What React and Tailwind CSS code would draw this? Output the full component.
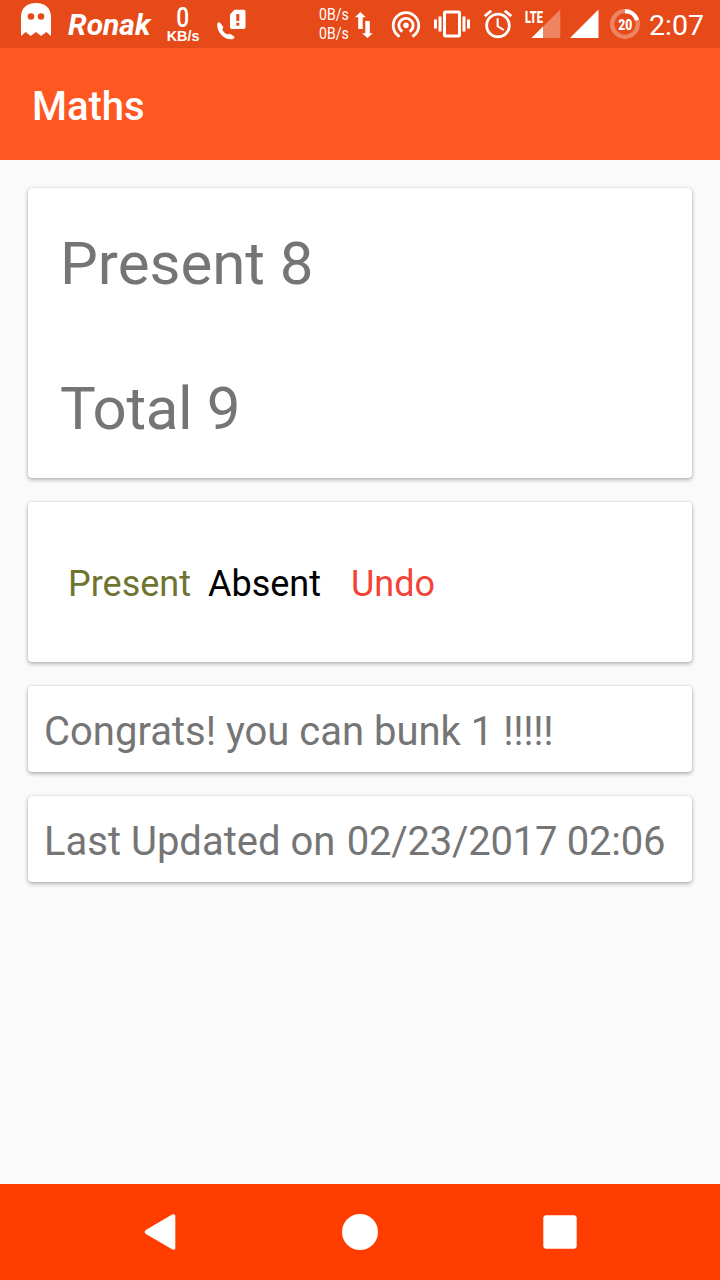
import React from "react";
import { MdWifiTethering, MdVibration, MdAccessAlarm } from "react-icons/md";

function Ghost() {
  return (
    <svg className="ml-[21px] mt-[3px] h-[33px] w-[30px] shrink-0" viewBox="0 0 30 33" fill="white">
      <path fillRule="evenodd" d="M0 33V14C0 5 6 0 15 0s15 5 15 14v19l-4.700-4L20 33l-5-4-5.300 4-5-4zM10 10.200a3.300 3.300 0 1 0 0 6.600 3.300 3.300 0 0 0 0-6.600zm10 0a3.300 3.300 0 1 0 0 6.600 3.300 3.300 0 0 0 0-6.600z" />
    </svg>
  );
}

function SimCall() {
  return (
    <svg className="ml-[16px] mt-[9px] h-[32px] w-[30px] shrink-0" viewBox="0 0 30 32" fill="white">
      <path d="M.3 15C.5 13.600 1.600 12.900 2.600 13.200L6 17.600C6.500 18.500 6.300 19.200 5.300 20.400 6.400 22.800 8.300 24.700 10.700 25.500 11.900 24.600 12.700 24.500 13.400 25L17.200 27.500C17.900 28.600 16.800 29.900 15.200 30.200 7 31 -.5 23 .3 15z" />
      <path fillRule="evenodd" d="M17.300.8h9.400a1.800 1.800 0 0 1 1.800 1.800v15.600a1.800 1.800 0 0 1-1.800 1.800H14.800a1.800 1.800 0 0 1-1.800-1.800V5.500zM19.300 5v7h3V5zm0 8.800v2.900h3v-2.900z" />
    </svg>
  );
}

function StatusBar() {
  return (
    <div className="flex h-12 items-start overflow-hidden bg-[#e64a19] text-white">
      <Ghost />
      <span className="ml-[17px] mt-[8px] w-[83px] shrink-0 text-[30px] font-bold italic leading-[34px]">Ronak</span>
      <div className="ml-[14px] mt-[7px] flex w-[36px] shrink-0 flex-col items-center">
        <span className="scale-x-[0.84] text-[27px] font-medium leading-[22px]">0</span>
        <span className="scale-x-[0.96] font-['Liberation_Sans',sans-serif] text-[15px] font-bold leading-[13px]">KB/s</span>
      </div>
      <SimCall />
      <div className="ml-[72px] mt-[5px] flex w-[36px] shrink-0 origin-left scale-x-[0.88] flex-col text-[16px] leading-[19px]">
        <span>0B/s</span>
        <span>0B/s</span>
      </div>
      <svg className="ml-0 mt-[12px] h-[26px] w-[18px] shrink-0" viewBox="0 0 18 26" fill="white">
        <path d="M5.300 0l5.500 5.300H7.700V17H3.200V5.300H0zM10.300 9h4.500v12.200h3L12.500 26 7 21.200h3.300z" />
      </svg>
      <MdWifiTethering className="ml-[16px] mt-[7px] size-[34px] shrink-0" />
      <MdVibration className="ml-[11px] mt-[6px] size-[36px] shrink-0" />
      <MdAccessAlarm className="ml-[11px] mt-[7px] size-[34px] shrink-0" />
      <svg className="ml-[9px] mt-[9px] h-[29px] w-[37px] shrink-0" viewBox="0 0 37 29" fill="white">
        <path fillOpacity=".32" d="M36.300.5V29H7.500z" />
        <path d="M19 17.600V29H7.500z" />
        <text x="1" y="13.500" fontSize="16.500" fontWeight="900" textLength="18" lengthAdjust="spacingAndGlyphs">LTE</text>
      </svg>
      <svg className="ml-[9px] mt-[9px] h-[29px] w-[29px] shrink-0" viewBox="0 0 29 29" fill="white">
        <path d="M28.500.5V29H0z" />
      </svg>
      <svg className="ml-[10px] mt-[9px] size-[32px] shrink-0" viewBox="0 0 32 32" fill="white">
        <circle cx="16" cy="15" r="12.800" fill="none" stroke="white" strokeOpacity=".32" strokeWidth="4.300" />
        <path d="M16 2.200a12.800 12.800 0 0 1 12.170 8.850" fill="none" stroke="white" strokeWidth="4.300" />
        <text x="9.200" y="20.700" fontSize="15" fontWeight="900" textLength="14" lengthAdjust="spacingAndGlyphs">20</text>
      </svg>
      <span className="ml-[8px] mt-[9px] text-[28.5px] leading-[34px]">2:07</span>
    </div>
  );
}

function Card({ className, children }) {
  return (
    <section className={"rounded-[4px] bg-white shadow-[0_2px_4px_rgba(0,0,0,0.28),0_0_2px_rgba(0,0,0,0.16)] " + className}>
      {children}
    </section>
  );
}

export default function App() {
  return (
    <div className="flex h-[1280px] w-[720px] flex-col bg-[#fafafa] font-['Roboto',sans-serif] text-[#757575]">
      <StatusBar />
      <header className="flex h-28 items-center bg-[#ff5722] px-8 pt-[6px]">
        <h1 className="text-[40px] font-medium leading-[48px] text-white">Maths</h1>
      </header>
      <main className="flex flex-1 flex-col gap-6 px-7 pt-7">
        <Card className="flex h-[290px] flex-col gap-[75px] pl-8 pt-[41px] text-[60px] leading-[70px]">
          <p>Present 8</p>
          <p className="tracking-[-0.35px]">Total 9</p>
        </Card>
        <Card className="flex h-[160px] items-center pl-10 pt-[4px] text-[36px] leading-[42px]">
          <button className="w-[140px] text-left text-[#6f7531]">Present</button>
          <button className="w-[143px] text-left text-black">Absent</button>
          <button className="text-[#f44336]">Undo</button>
        </Card>
        <Card className="flex h-[86px] items-center pl-4 pt-[4px] text-[40px] leading-[47px]">
          <p className="whitespace-nowrap">
            Congrats! you can bunk 1 <span className="tracking-[-0.3px]">!!!!!</span>
          </p>
        </Card>
        <Card className="flex h-[86px] items-center pl-4 pt-[4px] text-[40px] leading-[47px]">
          <p className="whitespace-nowrap">
            Last Updated on <span className="ml-[1.5px] tracking-[-0.25px]">02/23/2017 02:06</span>
          </p>
        </Card>
      </main>
      <nav className="flex h-24 items-center justify-center gap-[164px] bg-[#ff3d00]">
        <svg className="size-9" viewBox="0 0 36 36" fill="white">
          <path d="M30.500.3C32 -.2 33.300.5 33.300 2v32c0 1.500-1.300 2.200-2.800 1.500L3.900 20.100c-1.600-1-1.600-3.200 0-4.200z" />
        </svg>
        <svg className="size-9" viewBox="0 0 36 36" fill="white">
          <circle cx="18" cy="18" r="18" />
        </svg>
        <svg className="size-9" viewBox="0 0 36 36" fill="white">
          <rect x="1.300" y="1.300" width="33.400" height="33.400" rx="3" />
        </svg>
      </nav>
    </div>
  );
}
